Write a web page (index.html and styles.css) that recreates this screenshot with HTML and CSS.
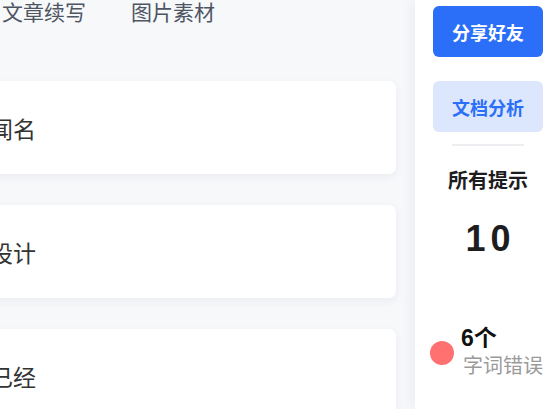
FILE: index.html
```html
<!DOCTYPE html>
<html>
<head>
  <meta charset="UTF-8" />
  <link rel="stylesheet" href="styles.css">
</head>
<body>
  <div class="page">
    <div class="main">
      <ul class="tabs">
        <li>文章续写</li>
        <li>图片素材</li>
      </ul>
      <div class="cards">
        <div class="card">闻名</div>
        <div class="card">设计</div>
        <div class="card">已经</div>
      </div>
    </div>
    <div class="side">
      <button class="btn btn-primary">分享好友</button>
      <button class="btn btn-light">文档分析</button>
      <div class="divider"></div>
      <h2 class="hint-title">所有提示</h2>
      <div class="hint-total">10</div>
      <div class="hint-item">
        <span class="dot"></span>
        <div class="hint-text">
          <strong>6个</strong>
          <span>字词错误</span>
        </div>
      </div>
    </div>
  </div>
</body>
</html>
```

FILE: styles.css
```css
html, body {
    margin: 0;
    padding: 0;
    height: 100%;
    overflow: hidden;
}

body {
    font-family: "Liberation Sans", "Noto Sans CJK SC", sans-serif;
    background: #f7f8fa;
}

.page {
    display: flex;
    height: 100%;
}

.main {
    width: 455px;
    margin-left: -40px;
    flex-shrink: 0;
}

.tabs {
    display: flex;
    gap: 45px;
    list-style: none;
    margin: 0;
    padding: 0 0 0 42px;
    font-size: 21px;
    line-height: 26px;
    color: #4e5563;
}

.cards {
    display: flex;
    flex-direction: column;
    gap: 31px;
    margin-top: 55px;
    padding: 0 19px 0 20px;
}

.card {
    height: 93px;
    background: #fff;
    border-radius: 7px;
    box-shadow: 0 3px 10px rgba(30, 40, 80, 0.06);
    display: flex;
    align-items: center;
    padding-left: 10px;
    font-size: 23px;
    color: #333;
}

.side {
    width: 110px;
    flex-shrink: 0;
    padding: 6px 18px 0;
    background: #fff;
    box-shadow: -4px 0 12px rgba(30, 40, 80, 0.05);
    display: flex;
    flex-direction: column;
    align-items: center;
}

.btn {
    width: 110px;
    height: 51px;
    border: 0;
    border-radius: 6px;
    font-family: inherit;
    font-size: 18px;
    font-weight: bold;
    padding: 0;
}

.btn-primary {
    background: #2b6ff8;
    color: #fff;
}

.btn-light {
    margin-top: 24px;
    background: #dce7fd;
    color: #2b6ff8;
}

.divider {
    width: 72px;
    height: 2px;
    background: #eceef1;
    margin-top: 12px;
}

.hint-title {
    margin: 22px 0 0;
    font-size: 20px;
    line-height: 26px;
    color: #1d1d1f;
}

.hint-total {
    margin-top: 25px;
    font-size: 36px;
    font-weight: bold;
    letter-spacing: 5px;
    line-height: 40px;
    color: #1d1d1f;
    padding-left: 5px;
}

.hint-item {
    align-self: flex-start;
    display: flex;
    align-items: center;
    gap: 7px;
    margin-top: 66px;
    margin-left: -3px;
    white-space: nowrap;
}

.dot {
    width: 24px;
    height: 24px;
    border-radius: 50%;
    background: #ff7070;
    margin-top: 2px;
}

.hint-text {
    display: flex;
    flex-direction: column;
}

.hint-text strong {
    font-size: 23px;
    line-height: 26px;
    color: #111;
}

.hint-text span {
    font-size: 20px;
    line-height: 24px;
    margin-top: 3px;
    color: #9a9a9a;
    margin-left: 2px;
}
```
